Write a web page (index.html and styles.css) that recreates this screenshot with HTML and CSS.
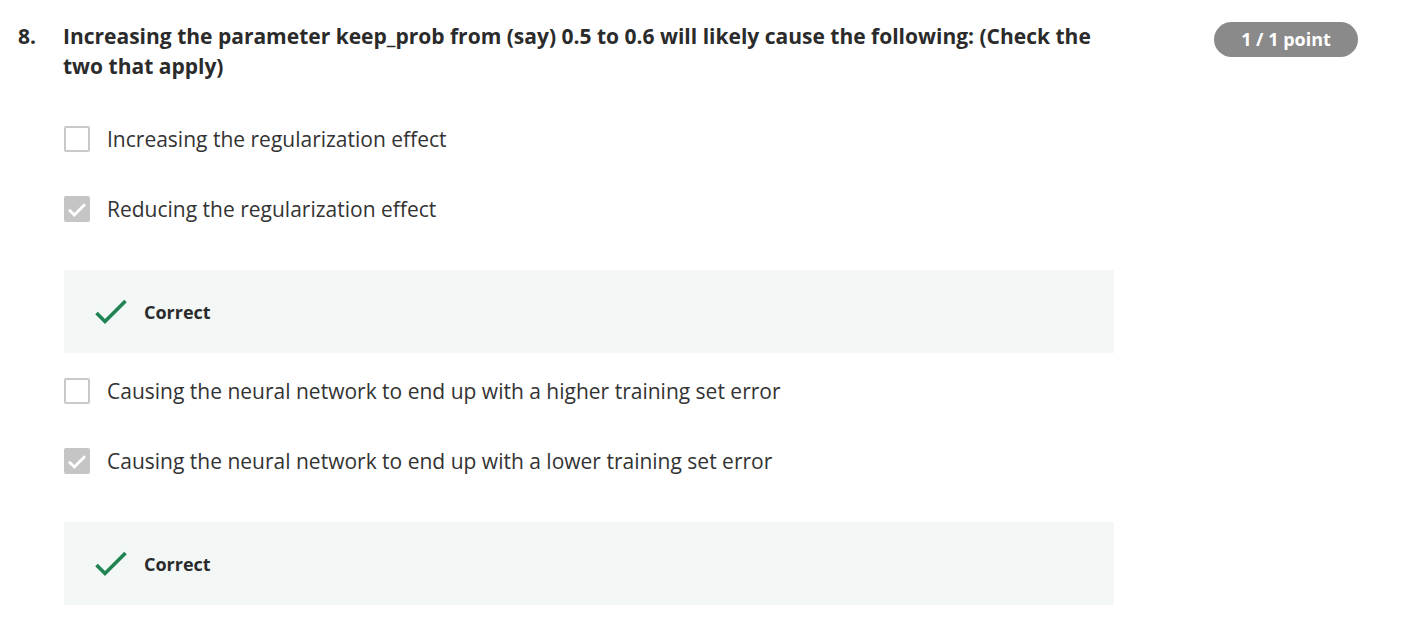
FILE: index.html
```html
<!DOCTYPE html>
<html>
<head>
<meta charset="utf-8">
<link rel="stylesheet" href="styles.css">
</head>
<body>
<div class="question">
  <div class="head">
    <div class="num">8.</div>
    <div class="title">Increasing the parameter keep_prob from (say) 0.5 to 0.6 will likely cause the following: (Check the two that apply)</div>
    <div class="badge-wrap"><span class="badge">1 / 1 point</span></div>
  </div>
  <div class="options">
    <div class="opt"><span class="box"></span><span class="label">Increasing the regularization effect</span></div>
    <div class="opt"><span class="box checked"><svg viewBox="0 0 26 26" width="26" height="26"><path d="M5 13.8 L10.3 19 L21 8.2" fill="none" stroke="#fff" stroke-width="2.8"/></svg></span><span class="label">Reducing the regularization effect</span></div>
    <div class="feedback"><svg class="tick" viewBox="0 0 32 26" width="32" height="26"><path d="M1.5 14 L10 22.5 L30.5 2" fill="none" stroke="#1f8354" stroke-width="3.6"/></svg><span class="fb-text">Correct</span></div>
    <div class="opt"><span class="box"></span><span class="label">Causing the neural network to end up with a higher training set error</span></div>
    <div class="opt"><span class="box checked"><svg viewBox="0 0 26 26" width="26" height="26"><path d="M5 13.8 L10.3 19 L21 8.2" fill="none" stroke="#fff" stroke-width="2.8"/></svg></span><span class="label">Causing the neural network to end up with a lower training set error</span></div>
    <div class="feedback"><svg class="tick" viewBox="0 0 32 26" width="32" height="26"><path d="M1.5 14 L10 22.5 L30.5 2" fill="none" stroke="#1f8354" stroke-width="3.6"/></svg><span class="fb-text">Correct</span></div>
  </div>
</div>
</body>
</html>
```
FILE: styles.css
```css
html, body {
  margin: 0;
  padding: 0;
  background: #fff;
}
body {
  font-family: "Open Sans", "Noto Sans", sans-serif;
  color: #1f1f1f;
}
.question {
  padding: 21px 0 0 18px;
}
.head {
  display: flex;
  align-items: flex-start;
}
.num {
  width: 45px;
  font-weight: 700;
  font-size: 21px;
  line-height: 30px;
  color: #2b2b2b;
}
.title {
  width: 1040px;
  font-weight: 700;
  font-size: 21px;
  line-height: 30px;
  color: #2b2b2b;
}
.badge-wrap {
  margin-left: 111px;
  padding-top: 1px;
}
.badge {
  display: inline-block;
  width: 144px;
  height: 35px;
  line-height: 35px;
  text-align: center;
  border-radius: 18px;
  background: #8a8a8a;
  color: #fff;
  font-weight: 700;
  font-size: 18px;
}
.options {
  margin-left: 46px;
  padding-top: 23px;
  width: 1050px;
}
.opt {
  display: flex;
  align-items: center;
  height: 70px;
}
.box {
  box-sizing: border-box;
  width: 26px;
  height: 26px;
  border: 2px solid #c9c9c9;
  border-radius: 2px;
  margin-right: 17px;
  flex: none;
}
.box.checked {
  background: #c5c5c5;
  border-color: #c5c5c5;
}
.box.checked svg {
  display: block;
  margin: -2px;
}
.label {
  font-size: 21px;
  color: #333;
}
.feedback {
  display: flex;
  align-items: center;
  height: 83px;
  background: #f3f8f6;
  margin: 26px 0 3px;
  padding-left: 31px;
}
.tick {
  display: block;
  margin-right: 17px;
}
.fb-text {
  font-weight: 700;
  font-size: 18px;
  color: #2b2b2b;
}
```
